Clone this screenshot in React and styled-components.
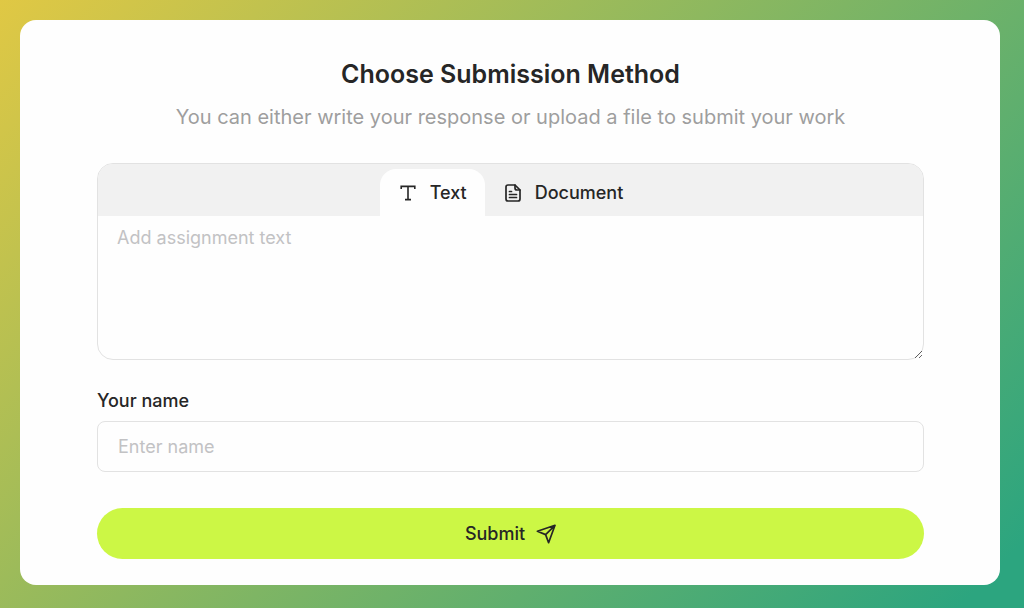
import React, { useState } from "react";
import styled, { createGlobalStyle } from "styled-components";

function TextIcon() {
  return (
    <svg width="20" height="20" viewBox="0 0 20 20" fill="none" stroke="currentColor" strokeWidth="1.6" aria-hidden="true">
      <path d="M3.2 6V3.400h13.600V6M10 3.400v13.200M7 16.600h6" />
    </svg>
  );
}

function DocumentIcon() {
  return (
    <svg width="20" height="20" viewBox="0 0 20 20" fill="none" stroke="currentColor" strokeWidth="1.7" strokeLinejoin="round" strokeLinecap="round" aria-hidden="true">
      <path d="M12 2H5a2 2 0 0 0-2 2v12a2 2 0 0 0 2 2h10a2 2 0 0 0 2-2V7z" />
      <path d="M12 2v3a2 2 0 0 0 2 2H17M6.500 8.500h2M6.500 11.500h7M6.500 14.500h7" />
    </svg>
  );
}

function SendIcon() {
  return (
    <svg width="20" height="20" viewBox="0 0 20 20" fill="none" stroke="currentColor" strokeWidth="1.7" strokeLinejoin="round" strokeLinecap="round" aria-hidden="true">
      <path d="M19 1.300 12.600 18.700 9.600 10.600 1.400 7.200ZM19 1.300 9.600 10.600" />
    </svg>
  );
}

function App() {
  const [tab, setTab] = useState("text");
  const [text, setText] = useState("");
  const [name, setName] = useState("");

  return (
    <Page>
      <GlobalStyle />
      <Card onSubmit={(e) => e.preventDefault()}>
        <Title>Choose Submission Method</Title>
        <Subtitle>
          You can either write your response or upload a file to submit your work
        </Subtitle>
        <Editor>
          <TabBar role="tablist">
            <Tab type="button" role="tab" aria-selected={tab === "text"} $active={tab === "text"} onClick={() => setTab("text")}>
              <TextIcon />
              Text
            </Tab>
            <Tab type="button" role="tab" aria-selected={tab === "document"} $active={tab === "document"} onClick={() => setTab("document")}>
              <DocumentIcon />
              Document
            </Tab>
          </TabBar>
          {tab === "text" ? (
            <TextArea
              aria-label="Assignment text"
              placeholder="Add assignment text"
              value={text}
              onChange={(e) => setText(e.target.value)}
            />
          ) : (
            <FileArea>
              <input type="file" aria-label="Document" />
            </FileArea>
          )}
        </Editor>
        <Label htmlFor="name">Your name</Label>
        <NameInput
          id="name"
          type="text"
          placeholder="Enter name"
          value={name}
          onChange={(e) => setName(e.target.value)}
        />
        <SubmitButton type="submit">
          Submit
          <SendIcon />
        </SubmitButton>
      </Card>
    </Page>
  );
}

const GlobalStyle = createGlobalStyle`
  * {
    box-sizing: border-box;
  }
  body {
    margin: 0;
    font-family: Inter, sans-serif;
    color: #262626;
  }
  button, input, textarea {
    font-family: inherit;
    color: inherit;
  }
`;

const Page = styled.main`
  display: flex;
  min-height: 100vh;
  padding: 20px 24px 23px 20px;
  background: linear-gradient(135deg, #e0c844, #2ca57f 96%);
`;

const Card = styled.form`
  flex: 1;
  display: flex;
  flex-direction: column;
  padding: 38px 76px 26px 77px;
  border-radius: 16px;
  background: #fefefe;
`;

const Title = styled.h1`
  margin: 0;
  font-size: 25px;
  font-weight: 600;
  line-height: 32px;
  text-align: center;
`;

const Subtitle = styled.p`
  margin: 12px 0 31px;
  font-size: 20px;
  line-height: 30px;
  text-align: center;
  color: #9e9e9e;
`;

const Editor = styled.section`
  display: flex;
  flex-direction: column;
  border: 1px solid #e2e2e2;
  border-radius: 16px;
`;

const TabBar = styled.div`
  display: flex;
  justify-content: center;
  padding-top: 5px;
  border-radius: 15px 15px 0 0;
  background: #f1f1f1;
`;

const Tab = styled.button`
  display: flex;
  align-items: center;
  gap: 12px;
  height: 47px;
  padding: 0 18px;
  border: none;
  border-radius: 16px 16px 0 0;
  background: ${(props) => (props.$active ? "#fefefe" : "transparent")};
  font-size: 18px;
  font-weight: 500;
  cursor: pointer;
`;

const TextArea = styled.textarea`
  display: block;
  width: 100%;
  height: 143px;
  padding: 10px 19px;
  border: none;
  border-radius: 0 0 4px 4px;
  outline: none;
  background: transparent;
  font-size: 18px;
  line-height: 24px;
  resize: vertical;
  &::placeholder {
    color: #c2c2c4;
  }
`;

const FileArea = styled.div`
  height: 143px;
  padding: 20px;
`;

const Label = styled.label`
  margin: 29px 0 8px;
  font-size: 18px;
  font-weight: 500;
  line-height: 24px;
`;

const NameInput = styled.input`
  height: 51px;
  padding: 0 20px;
  border: 1px solid #e2e2e2;
  border-radius: 8px;
  background: transparent;
  font-size: 18px;
  &::placeholder {
    color: #c2c2c4;
  }
`;

const SubmitButton = styled.button`
  display: flex;
  align-items: center;
  justify-content: center;
  gap: 11px;
  height: 51px;
  margin-top: 36px;
  border: none;
  border-radius: 26px;
  background: #ccf745;
  font-size: 18px;
  font-weight: 500;
  cursor: pointer;
`;

export default App;
